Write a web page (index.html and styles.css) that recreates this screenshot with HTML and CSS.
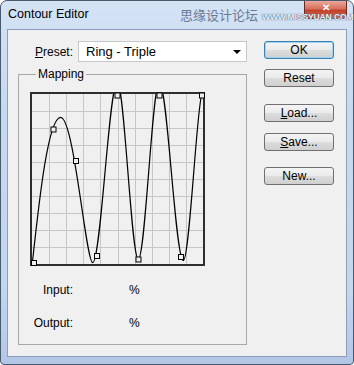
FILE: index.html
```html
<!DOCTYPE html>
<html lang="en">
<head>
    <meta charset="UTF-8">
    <title>Contour Editor</title>
    <link rel="stylesheet" href="styles.css">
</head>
<body>
    <div class="window">
        <div class="titlebar">
            <span class="title">Contour Editor</span>
            <div class="close-btn">&#x2715;</div>
        </div>
        <!-- site watermark stamped over the title bar -->
        <div class="watermark">
            <span class="wm-cn">思缘设计论坛</span>
            <span class="wm-url">WWW.MISSYUAN.COM</span>
        </div>

        <div class="client">
            <div class="left-col">
                <div class="preset-row">
                    <label class="preset-label"><u>P</u>reset:</label>
                    <div class="select">
                        <span>Ring - Triple</span>
                        <span class="arrow"></span>
                    </div>
                </div>

                <fieldset class="mapping">
                    <legend>Mapping</legend>
                    <svg class="graph" width="175" height="174" viewBox="0 0 175 174">
                        <defs>
                            <clipPath id="inner"><rect x="2" y="2" width="171" height="170"/></clipPath>
                        </defs>
                        <rect x="0" y="0" width="175" height="174" fill="#f0f0f0"/>
                        <path d="M19.5,2V172M36.5,2V172M53.5,2V172M70.5,2V172M88.5,2V172M105.5,2V172M122.5,2V172M139.5,2V172M156.5,2V172
                                 M2,19.5H173M2,36.5H173M2,53.5H173M2,70.5H173M2,87.5H173M2,104.5H173M2,121.5H173M2,138.5H173M2,155.5H173"
                              stroke="#c6c6c6" stroke-width="1" fill="none"/>
                        <path clip-path="url(#inner)" fill="none" stroke="#000" stroke-width="1.2"
                              d="M2.3,171.3 C9,110 18,25.3 30.7,25.3
                                 C44,25.3 56,170.7 62.7,170.7
                                 C70.9,170.7 79.1,-10 87.3,-10
                                 C94.3,-10 101.3,167.3 108.3,167.3
                                 C115.3,167.3 122.3,-10 129.3,-10
                                 C137.3,-10 145.3,168.7 153.3,168.7
                                 C159.5,168.7 167,10 172,2"/>
                        <rect x="1" y="1" width="173" height="172" fill="none" stroke="#2e2e2e" stroke-width="2"/>
                        <g fill="#f0f0f0" stroke="#000" stroke-width="1">
                            <rect x="1.5" y="168.5" width="5" height="5"/>
                            <rect x="21" y="35" width="5" height="5"/>
                            <rect x="43.5" y="66.5" width="5" height="5"/>
                            <rect x="64.5" y="161.5" width="5" height="5"/>
                            <rect x="85" y="1" width="5" height="5"/>
                            <rect x="106" y="165" width="5" height="5"/>
                            <rect x="127" y="1" width="5" height="5"/>
                            <rect x="148.5" y="162.5" width="5" height="5"/>
                            <rect x="169.5" y="1" width="5" height="5"/>
                        </g>
                    </svg>

                    <div class="readout readout-input">
                        <span class="readout-label">Input:</span>
                        <span class="readout-pct">%</span>
                    </div>
                    <div class="readout readout-output">
                        <span class="readout-label">Output:</span>
                        <span class="readout-pct">%</span>
                    </div>
                </fieldset>
            </div>

            <div class="btn-col">
                <button class="btn btn-default">OK</button>
                <button class="btn btn-reset">Reset</button>
                <button class="btn btn-load"><u>L</u>oad...</button>
                <button class="btn btn-save"><u>S</u>ave...</button>
                <button class="btn btn-new">New...</button>
            </div>
        </div>
    </div>
</body>
</html>
```

FILE: styles.css
```css
* {
    margin: 0;
    padding: 0;
    box-sizing: border-box;
}

body {
    width: 354px;
    height: 365px;
    background: #ffffff;
    font-family: "Liberation Sans", Arial, sans-serif;
    font-size: 12px;
    color: #000;
}

.window {
    position: relative;
    width: 354px;
    height: 365px;
    display: flex;
    flex-direction: column;
    padding: 0 6px 7px;
    border: 1px solid #4a5a6e;
    border-radius: 7px 7px 4px 4px;
    background: linear-gradient(to bottom, #d4e3f4 0%, #c6d9ef 30%, #c2d6ee 80%, #b4c6e6 100%);
}

/* title bar */
.titlebar {
    height: 28px;
    display: flex;
    align-items: flex-start;
}

.title {
    padding: 6px 0 0 1px;
    line-height: 14px;
    font-size: 12.5px;
    color: #000;
}

.close-btn {
    margin-left: auto;
    width: 43px;
    height: 18px;
    padding-top: 1px;
    border: 1px solid #6d2a22;
    border-top: none;
    border-radius: 0 0 4px 4px;
    background: linear-gradient(to bottom, #e9a99c 0%, #d8705d 45%, #c0412b 55%, #d26a4c 100%);
    color: #fff;
    font-size: 10px;
    font-weight: bold;
    line-height: 11px;
    text-align: center;
}

.watermark {
    position: absolute;
    left: 179px;
    top: 5px;
    display: flex;
    align-items: flex-end;
    gap: 4px;
    height: 18px;
    white-space: nowrap;
}

.wm-cn {
    font-family: "Noto Sans CJK SC", sans-serif;
    font-size: 13px;
    line-height: 18px;
    color: #6a7a95;
}

.wm-url {
    font-family: "Liberation Sans", Arial, sans-serif;
    font-size: 8.5px;
    font-weight: bold;
    line-height: 10px;
    padding-bottom: 2px;
    letter-spacing: -0.1px;
    color: #eef2f8;
    text-shadow: 0 0 1px #4e5e78, 0 0 1px #4e5e78;
}

/* dialog body */
.client {
    flex: 1;
    display: flex;
    padding: 11px 0 0 10px;
    border: 1px solid #8b9fb8;
    background: #f0f0f0;
}

.left-col {
    width: 229px;
}

.preset-row {
    display: flex;
    align-items: center;
    height: 21px;
}

.preset-label {
    width: 60px;
    padding-left: 17px;
}

.select {
    position: relative;
    width: 169px;
    height: 21px;
    padding: 0 0 0 7px;
    border: 1px solid #c8c8c8;
    background: #fff;
    line-height: 19px;
    font-size: 13px;
}

.arrow {
    position: absolute;
    right: 5px;
    top: 8px;
    border-left: 4px solid transparent;
    border-right: 4px solid transparent;
    border-top: 4px solid #000;
}

.mapping {
    margin-top: 5px;
    width: 229px;
    height: 278px;
    padding: 0 11px;
    border: 1px solid #a8a8a8;
}

.mapping legend {
    margin-left: 6px;
    padding: 0 2px;
    line-height: 14px;
    font-size: 12px;
}

.graph {
    display: block;
    margin-top: 11px;
}

.readout {
    display: flex;
    line-height: 14px;
}

.readout-input {
    margin-top: 17px;
}

.readout-output {
    margin-top: 19px;
}

.readout-label {
    width: 43px;
    text-align: right;
}

.readout-pct {
    margin-left: 56px;
}

/* buttons */
.btn-col {
    display: flex;
    flex-direction: column;
    margin-left: 17px;
}

.btn {
    width: 70px;
    height: 18px;
    border: 1px solid #707070;
    border-radius: 3px;
    background: linear-gradient(to bottom, #f4f4f4 0%, #ebebeb 48%, #dddddd 52%, #cfcfcf 100%);
    font-family: "Liberation Sans", Arial, sans-serif;
    font-size: 12px;
    line-height: 16px;
    color: #000;
}

.btn-default {
    border-color: #3c7fb1;
    box-shadow: inset 0 0 0 1px #9fd3f2;
}

.btn-reset {
    margin-top: 10px;
}

.btn-load {
    margin-top: 17px;
}

.btn-save {
    margin-top: 11px;
}

.btn-new {
    margin-top: 16px;
}
```
